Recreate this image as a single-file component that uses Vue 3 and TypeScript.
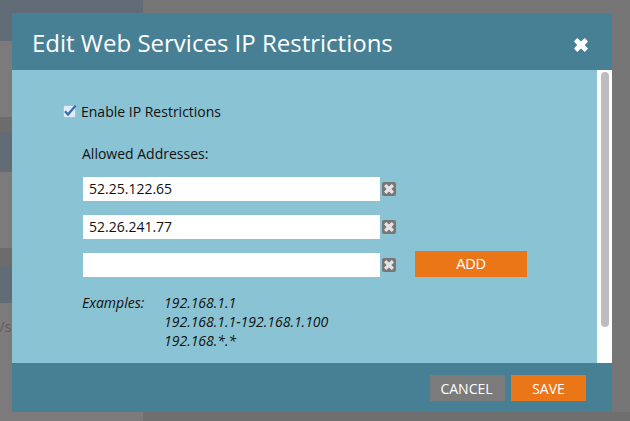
<script setup lang="ts">
const addresses = ['52.25.122.65', '52.26.241.77', '']
const examples = ['192.168.1.1', '192.168.1.1-192.168.1.100', '192.168.*.*']
</script>

<template>
  <div class="page">
    <div class="backdrop">
      <div class="side">
        <div class="band band-top"></div>
        <div class="shade shade-mid"></div>
        <div class="band band-mid"></div>
        <div class="shade shade-low"></div>
        <div class="band band-low"></div>
        <div class="stub">n/s</div>
      </div>
      <div class="rest"><div class="rest-fill"></div></div>
    </div>
    <section class="modal">
      <header class="head">
        <h1>Edit Web Services IP Restrictions</h1>
        <svg class="close" width="16" height="16" viewBox="0 0 16 16"><path d="M4.200 8 1 4.500 4.200 1 8 4.600 11.800 1 15 4.500 11.800 8 15 11.500 11.800 15 8 11.400 4.200 15 1 11.500z" fill="#fff"/></svg>
      </header>
      <div class="body">
        <div class="content">
          <label class="enable">
            <span class="check"><svg width="15" height="15" viewBox="0 0 15 15"><path d="M3 7.300 6 10.500 13.500 1.800" fill="none" stroke="#2f6fb5" stroke-width="2.300"/></svg></span>
            Enable IP Restrictions
          </label>
          <div class="allowed">Allowed Addresses:</div>
          <div class="rows">
            <div v-for="(a, i) in addresses" :key="i" class="row">
              <div class="field">{{ a }}</div>
              <span class="del"><svg width="12" height="12" viewBox="0 0 12 12"><path d="M3.600 6 1 3.300 3.300 1 6 3.600 8.700 1 11 3.300 8.400 6 11 8.700 8.700 11 6 8.400 3.300 11 1 8.700z" fill="#e4e4e4"/></svg></span>
              <button v-if="i === 2" class="btn add">ADD</button>
            </div>
          </div>
          <div class="examples">
            <span class="ex-label">Examples:</span>
            <div class="ex-list"><div v-for="e in examples" :key="e">{{ e }}</div></div>
          </div>
        </div>
        <div class="scroll"><div class="thumb"></div></div>
      </div>
      <footer class="foot">
        <button class="btn cancel">CANCEL</button>
        <button class="btn save">SAVE</button>
      </footer>
    </section>
  </div>
</template>

<style>
html, body { margin: 0; background: #767676; }
</style>

<style scoped>
.page { position: relative; width: 630px; height: 421px; overflow: hidden; background: #767676; font-family: "Open Sans", sans-serif; }
.backdrop { position: absolute; inset: 0; display: flex; }
.side { width: 143px; height: 421px; background: #7c7a7a; display: flex; flex-direction: column; position: relative; flex: none; }
.band { background: #626c76; flex: none; }
.shade { background: #6e6b6b; flex: none; }
.band-top { height: 41px; }
.shade-mid { height: 15px; margin-top: 76px; }
.band-mid { height: 40px; }
.shade-low { height: 17px; margin-top: 76px; }
.band-low { height: 38px; }
.stub { position: absolute; left: -9px; top: 317px; font-size: 14px; color: #5e5e5e; }
.rest { flex: 1; display: flex; flex-direction: column; justify-content: flex-end; }
.rest-fill { height: 9px; background: #6f6f6f; }
.modal { position: absolute; left: 12px; top: 13px; width: 600px; height: 399px; display: flex; flex-direction: column; }
.head { height: 57px; flex: none; background: #477f94; display: flex; align-items: center; justify-content: space-between; padding: 2px 23px 0 20px; box-sizing: border-box; }
h1 { margin: 0; font-size: 24px; font-weight: 400; color: #fff; line-height: 1; }
.close { flex: none; margin-top: 4px; }
.body { flex: 1; min-height: 0; display: flex; background: #8ac3d3; }
.content { flex: 1; padding: 31px 0 0 51px; color: #111; font-size: 14px; }
.enable { display: flex; align-items: center; height: 20px; gap: 5px; }
.check { width: 11px; height: 11px; background: #e3ecf6; border: 1px solid #a5c1dc; border-radius: 2px; display: flex; align-items: center; justify-content: center; }
.check svg { flex: none; }
.allowed { margin: 23px 0 0 19px; height: 20px; line-height: 20px; }
.rows { margin: 13px 0 0 20px; display: flex; flex-direction: column; gap: 14px; }
.row { display: flex; align-items: center; height: 24px; }
.field { width: 297px; height: 24px; line-height: 23px; background: #fff; padding-left: 6px; box-sizing: border-box; font-size: 14px; color: #111; }
.del { width: 14px; height: 14px; margin-left: 2px; background: #777; border-radius: 2px; display: flex; align-items: center; justify-content: center; }
.btn { border: 0; padding: 0; color: #fff; font-family: inherit; font-size: 14px; }
.add { width: 112px; height: 26px; margin: 0 0 2px 19px; background: #ea7617; font-family: "Liberation Sans", sans-serif; }
.examples { margin: 16px 0 0 19px; display: flex; font-style: italic; font-size: 14px; line-height: 19px; }
.ex-label { width: 82px; }
.scroll { width: 15px; background: #fff; display: flex; justify-content: center; padding-top: 2px; box-sizing: border-box; }
.thumb { width: 8px; height: 255px; background: #bdbdbd; border-radius: 4px; }
.foot { height: 49px; flex: none; background: #477f94; display: flex; justify-content: flex-end; align-items: flex-start; gap: 6px; padding: 12px 26px 0 0; box-sizing: border-box; }
.cancel { width: 75px; height: 26px; background: #7b7b7b; text-indent: -2px; }
.save { width: 75px; height: 26px; background: #ea7617; }
</style>
